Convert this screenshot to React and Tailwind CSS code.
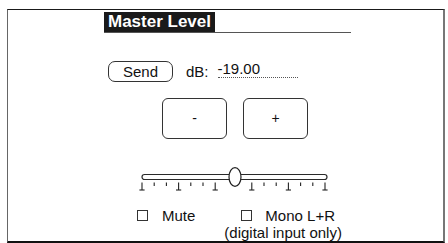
const ticks = Array.from({ length: 16 }, (_, i) => i).filter((i) => i !== 7 && i !== 8);

const LevelSlider = () => (
    <svg width="196" height="28" viewBox="0 0 196 28" className="ml-[128px] mt-[26px] block">
        <rect x="6" y="9.5" width="185" height="5" rx="2.5" fill="#fff" stroke="#2a2a2a" strokeWidth="1.2" />
        {ticks.map((i) => {
            const x = 6 + i * 12.2;
            const major = i % 3 === 0;
            return major ? (
                <g key={i} stroke="#222" strokeWidth="1.1">
                    <line x1={x} y1="17.5" x2={x} y2="25" />
                    <line x1={x - 2.6} y1="25" x2={x + 2.6} y2="25" />
                </g>
            ) : (
                <line key={i} x1={x} y1="17.5" x2={x} y2="21" stroke="#222" strokeWidth="1.1" />
            );
        })}
        <ellipse cx="99" cy="12" rx="6" ry="9.3" fill="#fff" stroke="#222" strokeWidth="1.2" />
    </svg>
);

const Box = () => <span className="block h-[11px] w-[11px] shrink-0 border border-[#333] bg-white" />;

export default function App() {
    return (
        <div className="h-[243px] w-[448px] overflow-hidden bg-white pl-[7px] pt-[9px] font-['Liberation_Sans',Arial,sans-serif] text-[#111]">
            <div className="h-[234px] w-[438px] border-t border-b-2 border-l-[1.5px] border-r-2 border-t-[#1a1a1a] border-b-[#111] border-l-[#666] border-r-[#777]">
                <div className="ml-[96px] mt-[2px] flex w-[247px] border-b-[1.5px] border-[#555]">
                    <span className="h-[20px] bg-[#1a1a1a] px-[4px] text-[17px] font-bold leading-[20px] text-white">
                        Master Level
                    </span>
                </div>

                <div className="ml-[100px] mt-[28px] flex h-[21px] items-start">
                    <button
                        type="button"
                        className="flex h-[21px] w-[65px] items-center justify-center rounded-[7px] border border-[#333] bg-white text-[15px] leading-none"
                    >
                        Send
                    </button>
                    <span className="ml-[13px] text-[15px] leading-[21px]">dB:</span>
                    <span className="ml-[9px] w-[80px] border-b border-dotted border-[#555] text-[15px] leading-[16px]">
                        -19.00
                    </span>
                </div>

                <div className="ml-[154px] mt-[16px] flex gap-[16px]">
                    <button
                        type="button"
                        className="flex h-[41px] w-[65px] items-center justify-center rounded-[6px] border border-[#333] bg-white text-[14px]"
                    >
                        -
                    </button>
                    <button
                        type="button"
                        className="flex h-[41px] w-[65px] items-center justify-center rounded-[6px] border border-[#333] bg-white text-[14px]"
                    >
                        +
                    </button>
                </div>

                <LevelSlider />

                <div className="ml-[129px] mt-[13.5px] flex items-start text-[15px]">
                    <div className="flex h-[18px] items-center">
                        <Box />
                        <span className="ml-[14px] leading-[18px]">Mute</span>
                    </div>
                    <div className="ml-[46px] flex flex-col items-start">
                        <div className="flex h-[18px] items-center">
                            <Box />
                            <span className="ml-[13px] leading-[18px]">Mono L+R</span>
                        </div>
                        <span className="-ml-[17px] whitespace-nowrap leading-[15px]">(digital input only)</span>
                    </div>
                </div>
            </div>
        </div>
    );
}
